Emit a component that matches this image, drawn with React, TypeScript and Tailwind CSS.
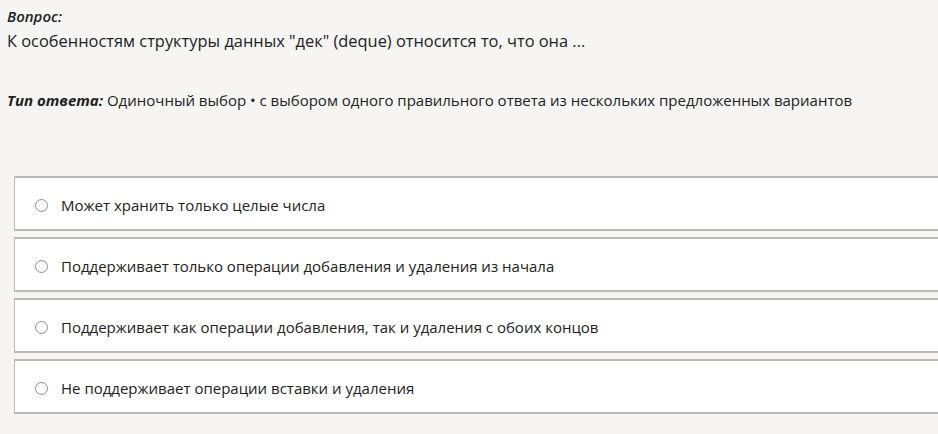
import React from "react";

const options = [
  "Может хранить только целые числа",
  "Поддерживает только операции добавления и удаления из начала",
  "Поддерживает как операции добавления, так и удаления с обоих концов",
  "Не поддерживает операции вставки и удаления",
];

const App = () => {
  return (
    <div
      className="w-[938px] h-[434px] overflow-hidden bg-[#f6f5f3] text-[#222] text-[15px]"
      style={{ fontFamily: '"Open Sans", "Noto Sans", sans-serif' }}
    >
      <div className="pl-[7px] pt-[5px]">
        <div className="font-semibold italic leading-[22px]">Вопрос:</div>
        <div className="text-[16.4px] leading-[22px] mt-[3px]">
          К особенностям структуры данных "дек" (deque) относится то, что она ...
        </div>
        <div className="leading-[22px] mt-[37px]">
          <span className="font-bold italic">Тип ответа:</span> Одиночный выбор • с выбором одного
          правильного ответа из нескольких предложенных вариантов
        </div>
      </div>

      <div className="flex flex-col gap-[6px] pl-[14px] mt-[65px]">
        {options.map((text) => (
          <label
            key={text}
            className="flex items-center h-[55px] bg-white border-y-2 border-l border-[#b9b9b9] pl-[20px] pt-[3px]"
          >
            <span className="w-[13px] h-[13px] rounded-full border border-[#8f8f8f] bg-white shrink-0" />
            <span className="ml-[13px] leading-[22px]">{text}</span>
          </label>
        ))}
      </div>
    </div>
  );
};

export default App;
